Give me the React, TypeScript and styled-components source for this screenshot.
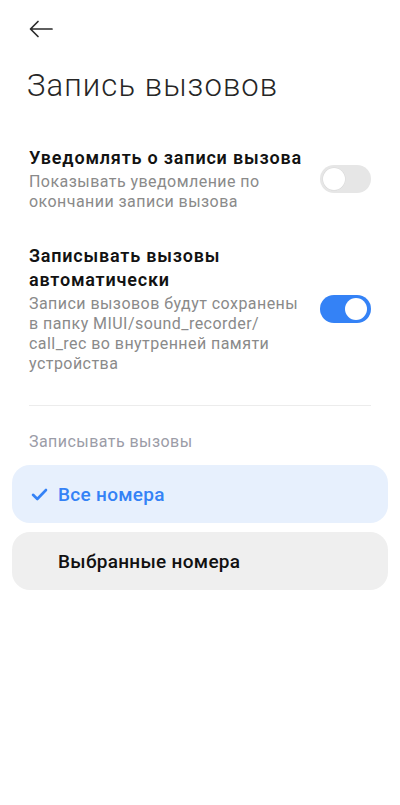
import React, { useState } from 'react'
import styled, { createGlobalStyle } from 'styled-components'

const GlobalStyle = createGlobalStyle`
  html, body {
    margin: 0;
    padding: 0;
    background: #ffffff;
  }
  body {
    font-family: Roboto, "Noto Sans", "Liberation Sans", sans-serif;
    -webkit-font-smoothing: antialiased;
  }
`

type Option = 'all' | 'selected'

function CheckMark() {
  return (
    <svg width="17" height="13" viewBox="0 0 17 13" fill="none">
      <path
        d="M2 6.8L6.3 11L15 2"
        stroke="#3482f6"
        strokeWidth="2.6"
        strokeLinecap="round"
        strokeLinejoin="round"
      />
    </svg>
  )
}

function App() {
  const [notify, setNotify] = useState(false)
  const [auto, setAuto] = useState(true)
  const [option, setOption] = useState<Option>('all')

  return (
    <Page>
      <GlobalStyle />
      <Header>
        <BackButton aria-label="Назад">
          <svg width="26" height="20" viewBox="0 0 26 20" fill="none">
            <path
              d="M24 10H3M10 2.5L2.5 10L10 17.5"
              stroke="#2b2b2b"
              strokeWidth="1.7"
              strokeLinecap="round"
              strokeLinejoin="round"
            />
          </svg>
        </BackButton>
      </Header>
      <Title>Запись вызовов</Title>

      <SettingsList>
        <SettingRow onClick={() => setNotify(!notify)}>
          <SettingText>
            <SettingTitle>Уведомлять о записи вызова</SettingTitle>
            <SettingHint>Показывать уведомление по окончании записи вызова</SettingHint>
          </SettingText>
          <Toggle $on={notify}>
            <Knob $on={notify} />
          </Toggle>
        </SettingRow>

        <SettingRow onClick={() => setAuto(!auto)}>
          <SettingText>
            <SettingTitle>Записывать вызовы автоматически</SettingTitle>
            <SettingHint>
              Записи вызовов будут сохранены в папку MIUI/sound_recorder/ call_rec во внутренней памяти
              устройства
            </SettingHint>
          </SettingText>
          <Toggle $on={auto}>
            <Knob $on={auto} />
          </Toggle>
        </SettingRow>
      </SettingsList>

      <Divider />

      <SectionLabel>Записывать вызовы</SectionLabel>

      <Options>
        <OptionItem $active={option === 'all'} onClick={() => setOption('all')}>
          <CheckSlot>{option === 'all' && <CheckMark />}</CheckSlot>
          Все номера
        </OptionItem>
        <OptionItem $active={option === 'selected'} onClick={() => setOption('selected')}>
          <CheckSlot>{option === 'selected' && <CheckMark />}</CheckSlot>
          Выбранные номера
        </OptionItem>
      </Options>
    </Page>
  )
}

export default App

const Page = styled.main`
  width: 400px;
  min-height: 805px;
  background: #ffffff;
  box-sizing: border-box;
`

const Header = styled.header`
  display: flex;
  align-items: center;
  height: 58px;
  padding: 0 0 0 28px;
`

const BackButton = styled.button`
  display: flex;
  align-items: center;
  justify-content: center;
  padding: 0;
  border: none;
  background: none;
  cursor: pointer;
`

const Title = styled.h1`
  margin: 8px 0 0;
  padding: 0 29px 0 27px;
  font-size: 31px;
  line-height: 40px;
  font-weight: 300;
  color: #262626;
  letter-spacing: 1.1px;
`

const SettingsList = styled.section`
  display: flex;
  flex-direction: column;
  gap: 32px;
  margin-top: 40px;
  padding: 0 29px;
`

const SettingRow = styled.div`
  display: flex;
  align-items: center;
  gap: 14px;
  cursor: pointer;
`

const SettingText = styled.div`
  flex: 1;
  display: flex;
  flex-direction: column;
`

const SettingTitle = styled.div`
  font-size: 18px;
  line-height: 24px;
  font-weight: 600;
  color: #121212;
  letter-spacing: 0.8px;
`

const SettingHint = styled.div`
  margin-top: 2px;
  font-size: 16px;
  line-height: 20px;
  color: #8a8a8a;
  letter-spacing: 0.45px;
`

const Toggle = styled.div<{ $on: boolean }>`
  position: relative;
  flex-shrink: 0;
  width: 51px;
  height: 28px;
  border-radius: 14px;
  background: ${(p) => (p.$on ? '#3482f6' : '#e6e6e6')};
`

const Knob = styled.div<{ $on: boolean }>`
  position: absolute;
  top: 3px;
  left: ${(p) => (p.$on ? '25px' : '3px')};
  width: 22px;
  height: 22px;
  border-radius: 50%;
  background: #ffffff;
  box-shadow: ${(p) => (p.$on ? 'none' : '0 0 0 0.5px #d8d8d8')};
`

const Divider = styled.hr`
  margin: 31px 29px 0;
  border: none;
  height: 1px;
  background: #ececec;
`

const SectionLabel = styled.div`
  margin-top: 26px;
  padding: 0 29px;
  font-size: 16px;
  line-height: 20px;
  color: #9b9ca7;
  letter-spacing: 0.45px;
`

const Options = styled.div`
  display: flex;
  flex-direction: column;
  gap: 9px;
  margin-top: 13px;
  padding: 0 12px;
`

const OptionItem = styled.div<{ $active: boolean }>`
  display: flex;
  align-items: center;
  height: 58px;
  padding: 0 19px;
  border-radius: 18px;
  background: ${(p) => (p.$active ? '#e7f0fd' : '#efefef')};
  color: ${(p) => (p.$active ? '#3482f6' : '#111111')};
  font-size: 19px;
  font-weight: 500;
  letter-spacing: 0.3px;
  cursor: pointer;
`

const CheckSlot = styled.span`
  display: flex;
  align-items: center;
  width: 27px;
`
